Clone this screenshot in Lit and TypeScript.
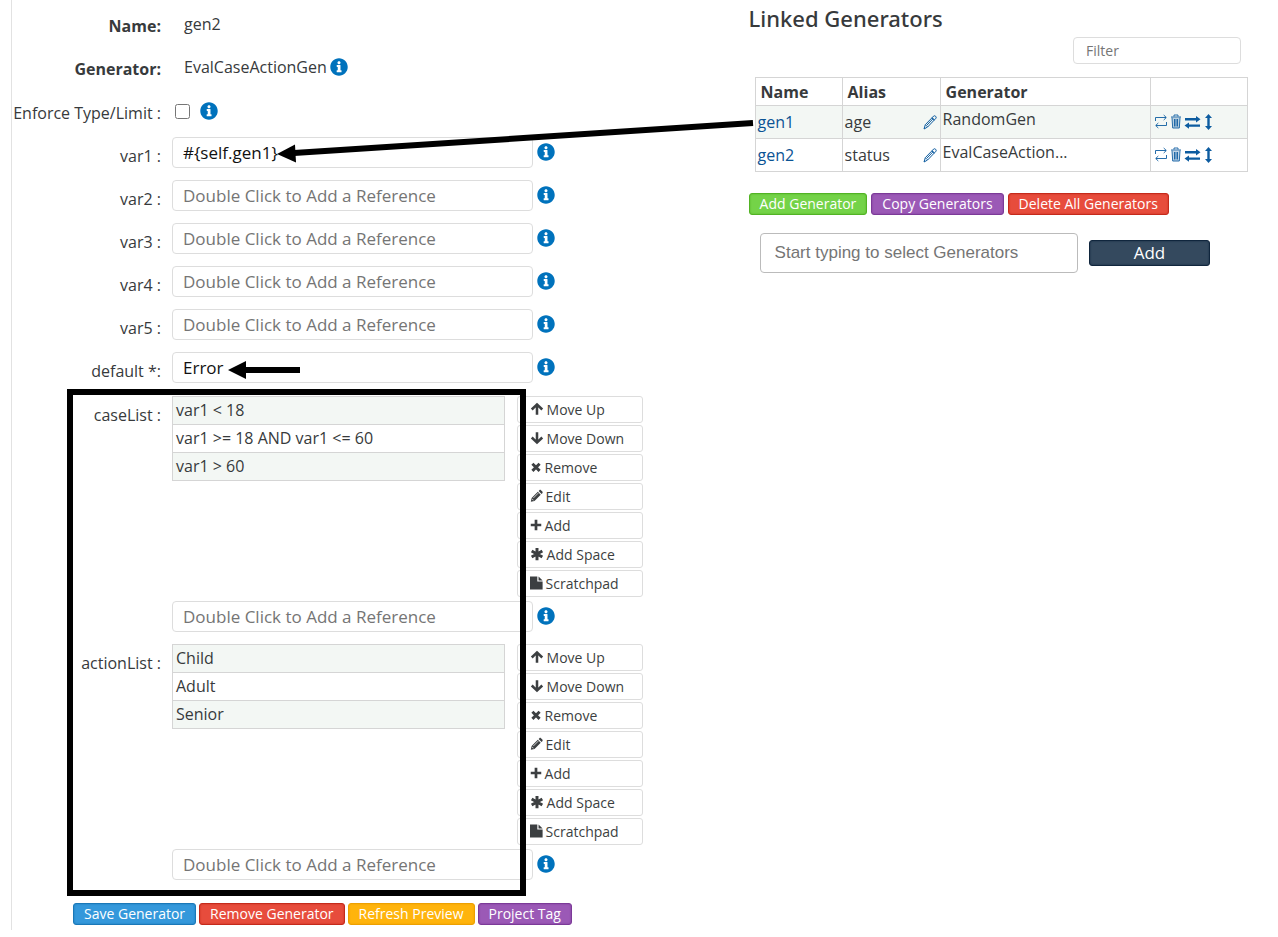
import { LitElement, html, css, svg, nothing } from "lit";
import { customElement, property } from "lit/decorators.js";

const icons: Record<string, unknown> = {
  up: svg`<path d="M8 2v12.5M2 8.6L8 2.8l6 5.8" fill="none" stroke="currentColor" stroke-width="2.9"/>`,
  down: svg`<path d="M8 1.5V14M2 7.4l6 5.8 6-5.8" fill="none" stroke="currentColor" stroke-width="2.9"/>`,
  remove: svg`<path d="M3.2 3.6l9.6 9.6M12.8 3.6l-9.6 9.6" fill="none" stroke="currentColor" stroke-width="3.9"/>`,
  edit: svg`<path d="M1 15l1-4.6L9.6 2.8l3.6 3.6L5.6 14zM10.6 1.9l1-1c.6-.6 1.300-.6 1.900 0l1.700 1.700c.6.6.6 1.300 0 1.900l-1 1z"/><path d="M4 10.600l6.200-6.200M2.600 11.600l1.800 1.800" stroke="#fff" stroke-width=".9"/>`,
  add: svg`<path d="M6.200 1h3.600v5.200H15v3.600H9.800V15H6.200V9.800H1V6.200h5.200z"/>`,
  space: svg`<path d="M8 1v14M1.900 4.500l12.200 7M1.900 11.500l12.200-7" fill="none" stroke="currentColor" stroke-width="3.400"/>`,
  scratch: svg`<path d="M0 0h9v6h6.500v10H0zM10.500 0L15.500 4.800h-5z"/>`,
};

const INFO =
  "M256 8C119.043 8 8 119.083 8 256c0 136.997 111.043 248 248 248s248-111.003 248-248C504 119.083 392.957 8 256 8zm0 85c26 0 44 18 44 43s-18 43-44 43-44-18-44-43 18-43 44-43zm72 302c0 7-5 12-12 12H202c-7 0-12-5-12-12v-34c0-7 5-12 12-12h18v-92h-18c-7 0-12-5-12-12v-34c0-7 5-12 12-12h84c7 0 12 5 12 12v138h18c7 0 12 5 12 12z";

@customElement("info-button")
class InfoButton extends LitElement {
  @property() about = "";
  static styles = css`
    :host { display: block; flex: none; width: 18px; height: 18px; }
    button { display: block; width: 18px; height: 18px; padding: 0; border: 0; background: none; color: #0072bc; cursor: pointer; }
    svg { display: block; width: 18px; height: 18px; fill: currentColor; }
  `;
  render() {
    return html`<button type="button" aria-label="About ${this.about}">
      <svg viewBox="0 0 512 512"><path d=${INFO} /></svg>
    </button>`;
  }
}

@customElement("app-root")
class AppRoot extends LitElement {
  static styles = css`
    :host {
      display: block;
      position: relative;
      color: #373a3c;
      background: #fff;
      font: 16px/22px "Open Sans", "Noto Sans", sans-serif;
    }
    * { box-sizing: border-box; }
    button, input { font-family: inherit; }
    a { color: #0b5394; text-decoration: none; }
    .page {
      display: grid;
      grid-template-columns: minmax(0, 737fr) minmax(0, 529fr);
      padding-left: 11px;
    }
    .editor { border-left: 1px solid #e2e2e2; padding: 8px 106px 5px 0; }
    .rows { display: grid; gap: 12px; }
    .row { display: grid; grid-template-columns: 149px minmax(0, 1fr); column-gap: 11px; min-height: 31px; }
    .label { padding-top: 7px; text-align: right; white-space: nowrap; }
    label.label { padding-top: 8px; }
    .strong { font-weight: 700; }
    .value { display: flex; align-items: center; gap: 3px; height: 31px; padding-left: 12px; }
    .check { display: flex; align-items: center; gap: 10px; padding: 3px 0 0 3px; }
    .check input { width: 15px; height: 15px; margin: 0; }
    .field { display: flex; gap: 4px; position: relative; padding-right: 88px; }
    .field info-button { margin-top: 6px; }
    .box {
      flex: 1;
      min-width: 0;
      height: 31px;
      border: 1px solid #ddd;
      border-radius: 4px;
      padding: 0 10px;
      font-size: 17px;
      color: #111;
      background: #fff;
    }
    .box::placeholder, .filter::placeholder, .picker::placeholder { color: #757575; opacity: 1; }
    .lists { position: relative; margin-top: 13px; }
    .lists::after {
      content: "";
      position: absolute;
      inset: -7px 117px -16px 55px;
      border: 6px solid #000;
      pointer-events: none;
    }
    .listarea { display: grid; grid-template-columns: minmax(0, 1fr) 126px; column-gap: 12px; align-items: start; height: 205px; }
    .items { list-style: none; margin: 0; padding: 0; border: 1px solid #d5d5d5; border-bottom: 0; white-space: nowrap; }
    .items li { height: 28px; line-height: 26px; padding-left: 3px; border-bottom: 1px solid #d5d5d5; }
    .items li:nth-child(odd) { background: #f3f7f4; }
    .tools { display: grid; gap: 2px; }
    .tool {
      display: flex;
      align-items: center;
      gap: 3px;
      height: 27px;
      padding: 0 12px 1px;
      border: 1px solid #ddd;
      border-radius: 3px;
      background: #fff;
      color: #3c3f41;
      font-size: 14px;
      white-space: nowrap;
    }
    .tool svg { width: 14px; height: 14px; flex: none; fill: currentColor; }
    .tool .small { width: 12px; height: 12px; }
    .tool .tall { width: 13px; height: 14px; }
    .actions { display: flex; gap: 3px; }
    .editor .actions { margin: 23px 0 0 61px; }
    .btn {
      height: 22px;
      padding: 0 10px;
      border: 1px solid var(--edge);
      border-radius: 3px;
      background: var(--fill);
      box-shadow: inset 0 0 2px var(--edge);
      color: #fff;
      font-size: 14px;
      line-height: 18px;
      white-space: nowrap;
    }
    .blue { --fill: #3498db; --edge: #1a78b8; }
    .red { --fill: #e74c3c; --edge: #c52a1b; }
    .amber { --fill: #ffb40c; --edge: #eda000; }
    .purple { --fill: #9b59b6; --edge: #7c3a98; }
    .green { --fill: #74d348; --edge: #52b324; }
    .navy { --fill: #34495e; --edge: #10263d; }

    .linked { padding: 6px 30px 0 0; }
    h2 { margin: 0; font-family: "Noto Sans", "Open Sans", sans-serif; font-size: 22px; line-height: 24px; font-weight: 500; }
    .filterline { display: flex; justify-content: flex-end; padding: 7px 7px 0 0; }
    .filter { width: 168px; height: 27px; border: 1px solid #ddd; border-radius: 4px; padding: 0 12px; font-size: 14px; background: #fff; }
    .grid { width: calc(100% - 6px); margin: 13px 0 0 6px; border-collapse: collapse; table-layout: fixed; }
    .grid th, .grid td { border: 1px solid #d5d5d5; text-align: left; padding: 0 2px; }
    .grid th { height: 28px; padding: 0 5px; font-weight: 700; }
    .grid td { height: 33px; }
    .grid tbody tr:nth-child(odd) { background: #f3f7f4; }
    .c1 { width: 87px; }
    .c2 { width: 98px; }
    .c4 { width: 97px; }
    .alias { display: flex; align-items: center; justify-content: space-between; }
    .grid .gen { vertical-align: top; padding-top: 2px; }
    .icon { display: block; padding: 0; border: 0; background: none; color: #0d5ca0; cursor: pointer; }
    .icon svg { display: block; height: 16px; }
    .icons { display: flex; gap: 3px; padding-left: 1px; }
    .linked .actions { gap: 4px; margin-top: 21px; }
    .pick { display: flex; align-items: center; gap: 11px; margin: 18px 38px 0 11px; }
    .picker {
      flex: 1;
      min-width: 0;
      height: 40px;
      border: 1px solid #bbb;
      border-radius: 4px;
      padding: 0 14px;
      font: 17px "Liberation Sans", Arial, sans-serif;
      background: #fff;
    }
    .wide { width: 121px; height: 26px; font-size: 17px; line-height: 22px; }
    .arrow { position: absolute; pointer-events: none; overflow: visible; }
    .link-arrow { left: 277px; top: 119px; }
    .default-arrow { left: 56px; top: 8px; }
  `;

  private textRow(name: string, value = "", mark = " :") {
    return html`<div class="row">
      <label class="label" for=${name}>${name}${mark}</label>
      <div class="field">
        <input class="box" id=${name} type="text" .value=${value} placeholder="Double Click to Add a Reference" />
        <info-button about=${name}></info-button>
        ${name === "default"
          ? html`<svg class="arrow default-arrow" width="72" height="20" viewBox="0 0 72 20">
              <path d="M0 10L18 1v6h54v6H18v6z" />
            </svg>`
          : nothing}
      </div>
    </div>`;
  }

  private tool(icon: string, text: string, size = "") {
    return html`<button class="tool" type="button">
      <svg class=${size} viewBox="0 0 16 16">${icons[icon]}</svg>${text}
    </button>`;
  }

  private listRow(name: string, items: string[]) {
    return html`<div class="row">
      <label class="label" for=${name}>${name} :</label>
      <div>
        <div class="listarea">
          <ul class="items">${items.map((i) => html`<li>${i}</li>`)}</ul>
          <div class="tools">
            ${this.tool("up", "Move Up")} ${this.tool("down", "Move Down")}
            ${this.tool("remove", "Remove", "small")} ${this.tool("edit", "Edit", "tall")}
            ${this.tool("add", "Add", "small")} ${this.tool("space", "Add Space")}
            ${this.tool("scratch", "Scratchpad", "tall")}
          </div>
        </div>
        <div class="field">
          <input class="box" id=${name} type="text" placeholder="Double Click to Add a Reference" />
          <info-button about=${name}></info-button>
        </div>
      </div>
    </div>`;
  }

  private generatorRow(name: string, alias: string, generator: string) {
    return html`<tr>
      <td><a href="#${name}">${name}</a></td>
      <td>
        <div class="alias">
          ${alias}
          <button class="icon" type="button" aria-label="Edit alias">
            <svg width="15" viewBox="0 0 15 16" fill="none" stroke="currentColor">
              <path d="M1 15l1.300-4.300L10.700 2c1-1 3.300.9 2.300 2.200L4.600 13zM8.800 3.800l2.600 2.400M2.500 10.800l2 2M4 11l6.400-6.600" />
            </svg>
          </button>
        </div>
      </td>
      <td class="gen">${generator}</td>
      <td>
        <div class="icons">
          <button class="icon" type="button" aria-label="Replace">
            <svg width="14" viewBox="0 0 14 16" fill="none" stroke="currentColor">
              <path d="M1.500 7V3.500h10.500M9.700 1l2.600 2.500L9.700 6M12.500 8v3.500H2M4.300 9l-2.600 2.500L4.300 14" stroke-width=".9" />
            </svg>
          </button>
          <button class="icon" type="button" aria-label="Delete">
            <svg width="10" viewBox="0 0 10 16" fill="none" stroke="currentColor">
              <path d="M1.300 3.500h7.400L8 14H2z" fill="currentColor" fill-opacity=".25" stroke="none" />
              <path d="M0 3h10M3 2.500V1h4v1.500M1 3.500L1.700 14h6.600L9 3.500M3.500 5v7.500M5 5v7.500M6.500 5v7.500" stroke-width=".9" />
            </svg>
          </button>
          <button class="icon" type="button" aria-label="Swap">
            <svg width="17" viewBox="0 0 17 16" fill="currentColor">
              <path d="M1 4h11V2l4.500 3.200L12 8.400V6.400H1zM16 10.400H5v-2L.5 11.600 5 14.800v-2h11z" />
            </svg>
          </button>
          <button class="icon" type="button" aria-label="Reorder">
            <svg width="9" viewBox="0 0 9 16" fill="currentColor">
              <path d="M4.500 0L8 4H5.700v8H8l-3.500 4L1 12h2.300V4H1z" />
            </svg>
          </button>
        </div>
      </td>
    </tr>`;
  }

  render() {
    return html`
      <main class="page">
        <section class="editor">
          <div class="rows">
            <div class="row">
              <span class="label strong">Name:</span>
              <div class="value">gen2</div>
            </div>
            <div class="row">
              <span class="label strong">Generator:</span>
              <div class="value">EvalCaseActionGen<info-button about="EvalCaseActionGen"></info-button></div>
            </div>
            <div class="row">
              <label class="label" for="enforce">Enforce Type/Limit :</label>
              <div class="check"><input id="enforce" type="checkbox" /><info-button about="Enforce Type/Limit"></info-button></div>
            </div>
            ${this.textRow("var1", "#{self.gen1}")} ${this.textRow("var2")} ${this.textRow("var3")}
            ${this.textRow("var4")} ${this.textRow("var5")} ${this.textRow("default", "Error", " *:")}
          </div>
          <div class="rows lists">
            ${this.listRow("caseList", ["var1 < 18", "var1 >= 18 AND var1 <= 60", "var1 > 60"])}
            ${this.listRow("actionList", ["Child", "Adult", "Senior"])}
          </div>
          <div class="actions">
            <button class="btn blue" type="button">Save Generator</button>
            <button class="btn red" type="button">Remove Generator</button>
            <button class="btn amber" type="button">Refresh Preview</button>
            <button class="btn purple" type="button">Project Tag</button>
          </div>
        </section>
        <section class="linked">
          <h2>Linked Generators</h2>
          <div class="filterline"><input class="filter" type="text" aria-label="Filter" placeholder="Filter" /></div>
          <table class="grid">
            <colgroup><col class="c1" /><col class="c2" /><col /><col class="c4" /></colgroup>
            <thead><tr><th>Name</th><th>Alias</th><th>Generator</th><th></th></tr></thead>
            <tbody>
              ${this.generatorRow("gen1", "age", "RandomGen")}
              ${this.generatorRow("gen2", "status", "EvalCaseAction...")}
            </tbody>
          </table>
          <div class="actions">
            <button class="btn green" type="button">Add Generator</button>
            <button class="btn purple" type="button">Copy Generators</button>
            <button class="btn red" type="button">Delete All Generators</button>
          </div>
          <div class="pick">
            <input class="picker" type="text" aria-label="Select generators" placeholder="Start typing to select Generators" />
            <button class="btn navy wide" type="button">Add</button>
          </div>
        </section>
      </main>
      <svg class="arrow link-arrow" width="476" height="44" viewBox="0 0 476 44">
        <path d="M476 4L17 34" stroke="#000" stroke-width="6" />
        <path d="M0 35L18 25.500 19 43.500z" />
      </svg>
    `;
  }
}
